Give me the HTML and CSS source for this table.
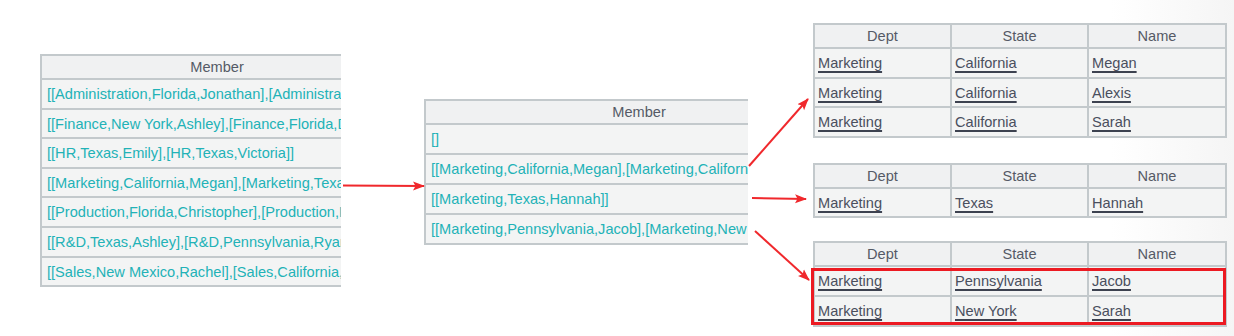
FILE: index.html
```html
<!DOCTYPE html>
<html>
<head>
<meta charset="utf-8">
<link rel="stylesheet" href="styles.css">
</head>
<body>
<div class="canvas">
  <div class="panel panel-left">
    <div class="list list-left">
      <div class="hd">Member</div>
      <div class="row r29">[[Administration,Florida,Jonathan],[Administration,Texas,Brittany]]</div>
      <div class="row r29">[[Finance,New York,Ashley],[Finance,Florida,Daniel]]</div>
      <div class="row r29">[[HR,Texas,Emily],[HR,Texas,Victoria]]</div>
      <div class="row r29">[[Marketing,California,Megan],[Marketing,Texas,Hannah]]</div>
      <div class="row r29">[[Production,Florida,Christopher],[Production,Florida,Matthew]]</div>
      <div class="row r29">[[R&amp;D,Texas,Ashley],[R&amp;D,Pennsylvania,Ryan]]</div>
      <div class="row r29">[[Sales,New Mexico,Rachel],[Sales,California,Andrew]]</div>
    </div>
  </div>

  <div class="panel panel-mid">
    <div class="list list-mid">
      <div class="hd">Member</div>
      <div class="row r30">[]</div>
      <div class="row r30">[[Marketing,California,Megan],[Marketing,California,Alexis]]</div>
      <div class="row r30">[[Marketing,Texas,Hannah]]</div>
      <div class="row r30">[[Marketing,Pennsylvania,Jacob],[Marketing,New York,Sarah]]</div>
    </div>
  </div>

  <div class="stack">
    <div class="grid">
      <div class="gh">Dept</div><div class="gh">State</div><div class="gh">Name</div>
      <div class="gc"><span class="u">Marketing</span></div><div class="gc"><span class="u">California</span></div><div class="gc"><span class="u">Megan</span></div>
      <div class="gc"><span class="u">Marketing</span></div><div class="gc"><span class="u">California</span></div><div class="gc"><span class="u">Alexis</span></div>
      <div class="gc"><span class="u">Marketing</span></div><div class="gc"><span class="u">California</span></div><div class="gc"><span class="u">Sarah</span></div>
    </div>
    <div class="grid grid-2">
      <div class="gh">Dept</div><div class="gh">State</div><div class="gh">Name</div>
      <div class="gc"><span class="u">Marketing</span></div><div class="gc"><span class="u">Texas</span></div><div class="gc"><span class="u">Hannah</span></div>
    </div>
    <div class="grid grid-3">
      <div class="gh">Dept</div><div class="gh">State</div><div class="gh">Name</div>
      <div class="hl">
        <div class="gc"><span class="u">Marketing</span></div><div class="gc"><span class="u">Pennsylvania</span></div><div class="gc"><span class="u">Jacob</span></div>
        <div class="gc"><span class="u">Marketing</span></div><div class="gc"><span class="u">New York</span></div><div class="gc"><span class="u">Sarah</span></div>
      </div>
    </div>
  </div>

  <svg class="arrows" width="1234" height="336" viewBox="0 0 1234 336">
    <defs>
      <marker id="ah" markerWidth="12" markerHeight="10" refX="11" refY="5" orient="auto" markerUnits="userSpaceOnUse">
        <path d="M0,0.5 L12,5 L0,9.5 L2.5,5 Z" fill="#f0282c"/>
      </marker>
    </defs>
    <line x1="343" y1="185.5" x2="424" y2="186" stroke="#f0282c" stroke-width="2" marker-end="url(#ah)"/>
    <line x1="749" y1="166" x2="808" y2="99" stroke="#f0282c" stroke-width="2" marker-end="url(#ah)"/>
    <line x1="752" y1="198" x2="806" y2="199" stroke="#f0282c" stroke-width="2" marker-end="url(#ah)"/>
    <line x1="755" y1="231" x2="809" y2="280" stroke="#f0282c" stroke-width="2" marker-end="url(#ah)"/>
  </svg>
</div>
</body>
</html>
```

FILE: styles.css
```css
* { box-sizing: border-box; }
html, body { margin: 0; padding: 0; }
body {
  width: 1234px;
  height: 336px;
  overflow: hidden;
  font-family: "Liberation Sans", Arial, sans-serif;
  font-size: 14.6px;
  background: linear-gradient(90deg, #ffffff 0%, #ffffff 90%, #f5f5f5 100%);
}
.canvas {
  position: relative;
  display: flex;
  align-items: flex-start;
  height: 336px;
  padding-left: 40px;
}
.panel {
  overflow: hidden;
  background: #f3f4f4;
  border-left: 2px solid #c3c9cc;
  border-top: 2px solid #c3c9cc;
}
.panel-left { width: 301px; margin-top: 54px; }
.panel-mid { width: 324px; margin-top: 99px; margin-left: 83px; }
.list { display: flex; flex-direction: column; }
.list-left { width: 350px; }
.list-mid { width: 426px; }
.hd {
  height: 24px;
  line-height: 23px;
  text-align: center;
  color: #555a66;
  background: #f0f1f2;
  border-bottom: 2px solid #c3c9cc;
}
.row {
  padding-left: 5px;
  color: #22b2b7;
  white-space: nowrap;
  overflow: hidden;
  border-bottom: 2px solid #c3c9cc;
}
.r29 { height: 29.6px; line-height: 28.6px; }
.r30 { height: 30px; line-height: 29px; }

.stack {
  display: flex;
  flex-direction: column;
  margin-left: 65px;
  margin-top: 23px;
}
.grid {
  display: grid;
  grid-template-columns: 137px 137px 138px;
  width: 414px;
  background: #f3f4f4;
  border-left: 2px solid #c3c9cc;
  border-top: 2px solid #c3c9cc;
}
.grid-2 { margin-top: 25px; }
.grid-3 { margin-top: 23px; }
.gh {
  height: 24px;
  line-height: 23px;
  text-align: center;
  color: #555a66;
  background: #f0f1f2;
  border-right: 2px solid #c3c9cc;
  border-bottom: 2px solid #c3c9cc;
}
.gc {
  height: 29.6px;
  line-height: 28.6px;
  padding-left: 3px;
  color: #4a4f5e;
  border-right: 2px solid #c3c9cc;
  border-bottom: 2px solid #c3c9cc;
}
.u {
  text-decoration: underline;
  text-decoration-color: #3d4250;
  text-decoration-thickness: 2px;
  text-underline-offset: 3px;
}
.hl {
  position: relative;
  grid-column: 1 / 4;
  display: grid;
  grid-template-columns: 137px 137px 138px;
}
.hl::after {
  content: "";
  position: absolute;
  left: -4px;
  right: 1px;
  top: 1px;
  bottom: 2px;
  border: 3px solid #ec1a22;
  pointer-events: none;
}
.arrows {
  position: absolute;
  left: 0;
  top: 0;
  pointer-events: none;
}
```
